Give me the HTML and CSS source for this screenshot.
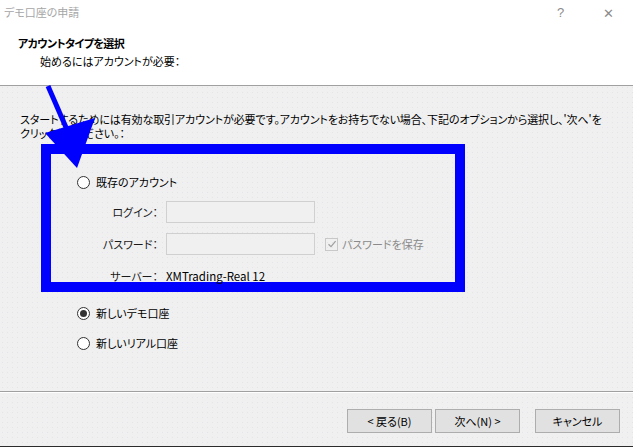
FILE: index.html
```html
<!DOCTYPE html>
<html lang="ja">
<head>
    <meta charset="utf-8">
    <title>デモ口座の申請</title>
    <link rel="stylesheet" href="styles.css">
</head>
<body>
    <div class="dialog">
        <div class="header">
            <div class="titlebar">
                <span class="title">デモ口座の申請</span>
                <span class="help">?</span>
                <span class="close">&#x2715;</span>
            </div>
            <div class="heading">アカウントタイプを選択</div>
            <div class="subheading">始めるにはアカウントが必要：</div>
        </div>

        <div class="content">
            <p class="intro">スタートするためには有効な取引アカウントが必要です。アカウントをお持ちでない場合、下記のオプションから選択し、'次へ'を<br>クリックしてください。：</p>

            <div class="highlight">
                <label class="radio-row first">
                    <span class="radio"></span>
                    既存のアカウント
                </label>
                <div class="form-grid">
                    <span class="label">ログイン：</span>
                    <span class="field"></span>
                    <span></span>

                    <span class="label">パスワード：</span>
                    <span class="field"></span>
                    <span class="save">
                        <span class="checkbox">
                            <svg width="10" height="10" viewBox="0 0 10 10"><path d="M1.5 5.2 L4 7.6 L8.6 2.2" fill="none" stroke="#a0a0a0" stroke-width="1.3"/></svg>
                        </span>
                        パスワードを保存
                    </span>

                    <span class="label">サーバー：</span>
                    <span class="server">XMTrading-Real 12</span>
                    <span></span>
                </div>
            </div>

            <label class="radio-row option">
                <span class="radio checked"></span>
                新しいデモ口座
            </label>
            <label class="radio-row option">
                <span class="radio"></span>
                新しいリアル口座
            </label>
        </div>

        <div class="footer">
            <button class="btn">&lt; 戻る(B)</button>
            <button class="btn">次へ(N) &gt;</button>
            <button class="btn cancel">キャンセル</button>
        </div>

        <svg class="arrow" width="120" height="120" viewBox="0 0 120 120">
            <path d="M6 6 L26 52" stroke="#0000ff" stroke-width="5" fill="none"/>
            <polygon points="3,53 53,38 35,88" fill="#0000ff"/>
        </svg>
    </div>
</body>
</html>
```

FILE: styles.css
```css
* {
    box-sizing: border-box;
}

body {
    margin: 0;
    background-color: #f0f0f0;
    font-family: "Noto Sans CJK JP", "Liberation Sans", sans-serif;
    font-size: 11px;
    font-feature-settings: "palt";
    color: #000;
}

.dialog {
    position: relative;
    width: 633px;
    height: 447px;
    display: flex;
    flex-direction: column;
    background-color: #f0f0f0;
    background-image: radial-gradient(#e4e4ea 0.6px, transparent 0.8px);
    background-size: 5px 5px;
    border-bottom: 1px solid #2b2b2b;
    overflow: hidden;
}

.header {
    height: 86px;
    background-color: #fff;
    border-bottom: 1px solid #a0a0a0;
}

.titlebar {
    height: 24px;
    display: flex;
    align-items: center;
    padding-left: 4px;
    color: #a6a6a6;
}

.title {
    flex: 1;
    line-height: 14px;
}

.help {
    width: 16px;
    margin-right: 30px;
    color: #8c8c8c;
    font-family: "Liberation Sans", sans-serif;
    font-size: 13px;
}

.close {
    width: 16px;
    margin-right: 14px;
    color: #8c8c8c;
    font-size: 13px;
}

.heading {
    margin-top: 12px;
    padding-left: 18px;
    font-weight: bold;
    letter-spacing: -0.6px;
    line-height: 14px;
}

.subheading {
    margin-top: 4px;
    padding-left: 40px;
    line-height: 14px;
}

.content {
    flex: 1;
    padding: 26px 0 0 20px;
    border-bottom: 1px solid #a0a0a0;
    box-shadow: 0 1px 0 #fff;
}

.intro {
    margin: 0;
    line-height: 14px;
    white-space: nowrap;
    letter-spacing: -0.1px;
}

.highlight {
    width: 424px;
    height: 148px;
    margin: 4px 0 0 21px;
    border: 10px solid #0000ff;
    padding: 21px 0 0 26px;
}

.radio-row {
    display: flex;
    align-items: center;
    gap: 6px;
    line-height: 14px;
}

.radio {
    width: 13px;
    height: 13px;
    border: 1px solid #333;
    border-radius: 50%;
    background-color: #fff;
    position: relative;
}

.radio.checked::after {
    content: "";
    position: absolute;
    left: 2px;
    top: 2px;
    width: 7px;
    height: 7px;
    border-radius: 50%;
    background-color: #333;
}

.form-grid {
    display: grid;
    grid-template-columns: 81px 149px auto;
    grid-auto-rows: 22px;
    column-gap: 8px;
    row-gap: 10px;
    align-items: center;
    margin-top: 12px;
}

.label {
    text-align: right;
    color: #1a1a1a;
}

.field {
    height: 22px;
    border: 1px solid #d0d0d0;
    background-color: #f0f0f0;
}

.save {
    display: flex;
    align-items: center;
    gap: 4px;
    margin-left: 2px;
    color: #8a8a8a;
}

.checkbox {
    width: 13px;
    height: 13px;
    border: 1px solid #c8c8c8;
    display: flex;
    align-items: center;
    justify-content: center;
}

.server {
    font-size: 11.5px;
}

.option {
    margin-left: 57px;
}

.option:first-of-type {
    margin-top: 14px;
}

.option + .option {
    margin-top: 16px;
}

.footer {
    height: 54px;
    display: flex;
    padding: 17px 0 0 347px;
    gap: 3px;
}

.btn {
    width: 85px;
    height: 24px;
    border: 1px solid #adadad;
    background-color: #e1e1e1;
    font-family: inherit;
    font-size: 11px;
    font-feature-settings: "palt";
    color: #000;
    padding: 0;
}

.btn.cancel {
    margin-left: 12px;
}

.arrow {
    position: absolute;
    left: 42px;
    top: 80px;
}
```
